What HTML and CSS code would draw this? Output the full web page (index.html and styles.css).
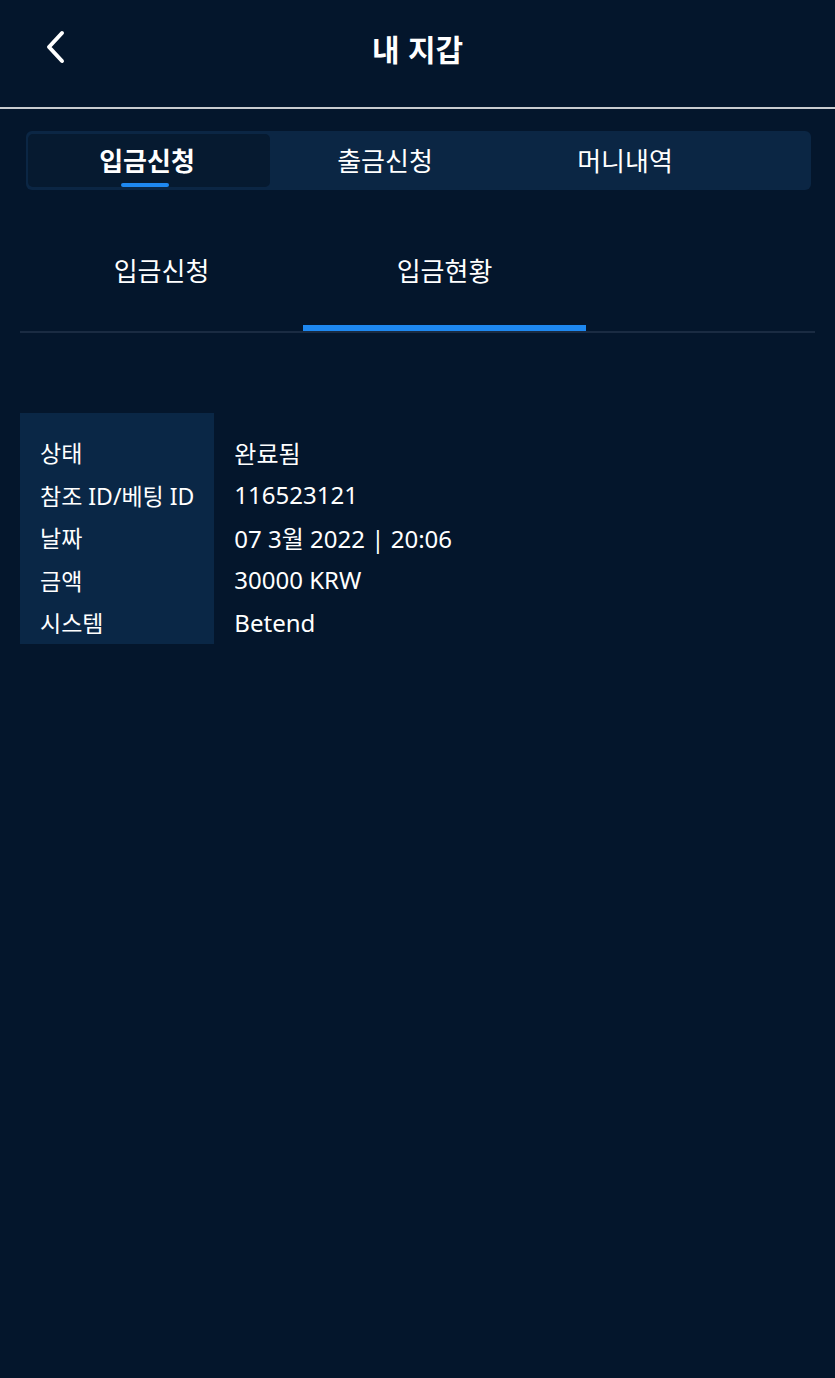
FILE: index.html
```html
<!DOCTYPE html>
<html lang="ko">
<head>
  <meta charset="UTF-8">
  <meta name="viewport" content="width=device-width, initial-scale=1.0">
  <title>내 지갑</title>
  <link rel="stylesheet" href="styles.css">
</head>
<body>
  <header class="topbar">
    <a class="back-btn" href="#">
      <svg width="22" height="34" viewBox="0 0 22 34">
        <path d="M18 3 L5 17 L18 31" fill="none" stroke="#fff" stroke-width="4" stroke-linecap="round" stroke-linejoin="round"/>
      </svg>
    </a>
    <h1>내 지갑</h1>
  </header>

  <nav class="wallet-tabs">
    <button class="wallet-tab active">입금신청</button>
    <button class="wallet-tab">출금신청</button>
    <button class="wallet-tab">머니내역</button>
  </nav>

  <div class="sub-tabs">
    <button class="sub-tab">입금신청</button>
    <button class="sub-tab active">입금현황</button>
  </div>

  <table class="deposit-info">
    <tr><th>상태</th><td>완료됨</td></tr>
    <tr><th>참조 ID/베팅 ID</th><td>116523121</td></tr>
    <tr><th>날짜</th><td>07 3월 2022 | 20:06</td></tr>
    <tr><th>금액</th><td>30000 KRW</td></tr>
    <tr><th>시스템</th><td>Betend</td></tr>
  </table>
</body>
</html>
```

FILE: styles.css
```css
body {
  margin: 0;
  min-height: 100vh;
  background: #04162c;
  color: #fff;
  font-family: "Noto Sans", "Noto Sans CJK KR", sans-serif;
}

button {
  font-family: inherit;
  color: #fff;
  background: none;
  border: none;
  padding: 0;
  cursor: pointer;
}

.topbar {
  height: 107px;
  display: flex;
  align-items: center;
  justify-content: center;
  position: relative;
  border-bottom: 2px solid #c9ccd0;
}

.topbar h1 {
  margin: 0 0 12px;
  font-size: 30px;
  font-weight: 700;
  font-family: "Noto Sans CJK KR", sans-serif;
}

.back-btn {
  position: absolute;
  left: 44px;
  top: 30px;
  display: flex;
}

.wallet-tabs {
  margin: 22px 24px 0 26px;
  height: 59px;
  padding: 3px 2px;
  box-sizing: border-box;
  background: #0b2644;
  border-radius: 6px;
  display: flex;
}

.wallet-tab {
  flex: 0 0 240px;
  font-size: 26px;
  font-family: "Noto Sans CJK KR", sans-serif;
  position: relative;
  border-radius: 5px;
  padding: 0 10px 3px 0;
}

.wallet-tab.active {
  flex-basis: 242px;
  padding: 0 4px 3px 0;
  background: #061a30;
  font-weight: 700;
}

.wallet-tab.active::after {
  content: "";
  position: absolute;
  left: 93px;
  bottom: 0;
  width: 48px;
  height: 4px;
  border-radius: 2px;
  background: #1e88f0;
}

.sub-tabs {
  margin: 38px 20px 0;
  height: 103px;
  display: flex;
  border-bottom: 2px solid #1a2b42;
}

.sub-tab {
  width: 283px;
  font-size: 26px;
  font-family: "Noto Sans CJK KR", sans-serif;
  padding-bottom: 14px;
  border-bottom: 6px solid transparent;
}

.sub-tab.active {
  border-bottom-color: #1e88f0;
}

.deposit-info {
  margin: 80px 20px 0;
  border-collapse: collapse;
  font-size: 24px;
}

.deposit-info th,
.deposit-info td {
  height: 42.5px;
  padding: 0 20px;
  text-align: left;
  font-weight: 400;
  white-space: nowrap;
}

.deposit-info th {
  width: 154px;
  font-size: 23px;
  background: #0a2746;
}

.deposit-info tr:first-child th,
.deposit-info tr:first-child td {
  padding-top: 18px;
}
```
